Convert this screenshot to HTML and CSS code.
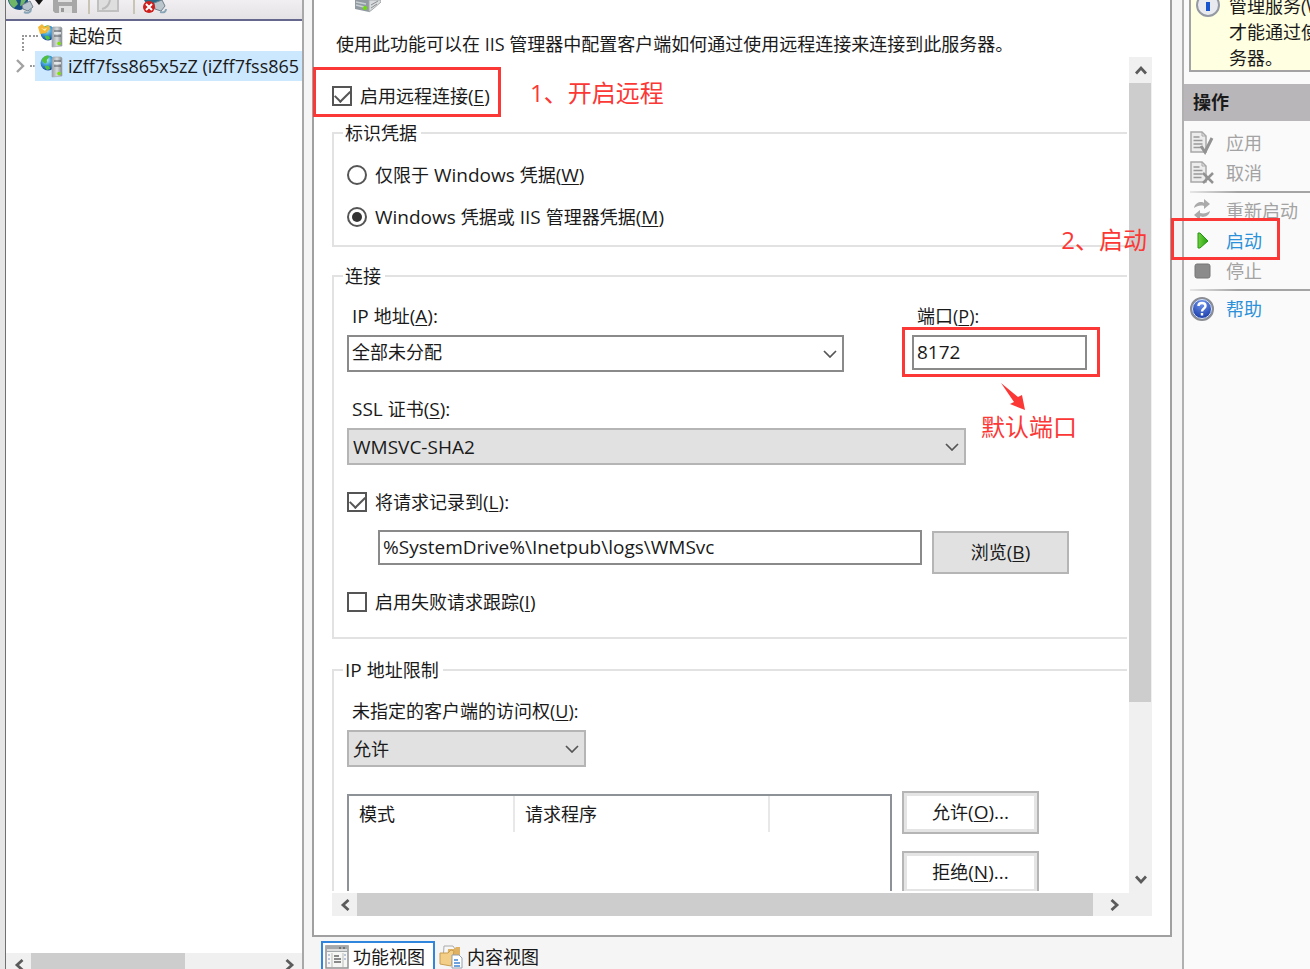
FILE: index.html
```html
<!DOCTYPE html>
<html lang="zh-CN">
<head>
<meta charset="utf-8">
<title>IIS 管理服务</title>
<link rel="stylesheet" href="styles.css">
</head>
<body>
<svg class="defs" aria-hidden="true">
  <defs>
    <radialGradient id="globe" cx="40%" cy="30%" r="75%">
      <stop offset="0" stop-color="#c9f1ff"/><stop offset=".45" stop-color="#3f9fdb"/><stop offset="1" stop-color="#123b8f"/>
    </radialGradient>
    <linearGradient id="tower" x1="0" x2="1"><stop offset="0" stop-color="#9aa1a6"/><stop offset=".5" stop-color="#d5dadd"/><stop offset="1" stop-color="#81888d"/></linearGradient>
    <linearGradient id="play" x1="0" x2="1"><stop offset="0" stop-color="#6fd23c"/><stop offset="1" stop-color="#27a012"/></linearGradient>
    <radialGradient id="help" cx="50%" cy="25%" r="80%"><stop offset="0" stop-color="#6f95ee"/><stop offset="1" stop-color="#0c2f9c"/></radialGradient>
    <symbol id="globe-server" viewBox="0 0 24 24">
      <circle cx="8" cy="9" r="7.500" fill="url(#globe)"/>
      <path d="M2 5c3-4 6-4 7-3 1 2-3 3-2 5 0 3-2 3-4 1-1-1-1-2-1-3zM5 12c3-1 5 0 5 3l-3 1c-1-1-2-2-2-4z" fill="#4fbf3c"/>
      <path d="M13 3h8l1 1v18l-10 1V5z" fill="url(#tower)" stroke="#a3aaae" stroke-width=".7"/>
      <path d="M14 7h7M14 12h7" stroke="#545b60" stroke-width="1.200"/>
      <path d="M14 9h7" stroke="#eef1f2" stroke-width="1.500"/>
      <circle cx="19" cy="19.500" r="1.800" fill="#7ce600"/>
    </symbol>
    <symbol id="left" viewBox="0 0 10 12"><path d="M8.500 1 3 6l5.500 5" fill="none" stroke="#5b5b5b" stroke-width="2.800"/></symbol>
    <symbol id="right" viewBox="0 0 10 12"><path d="M1.500 1 7 6l-5.500 5" fill="none" stroke="#5b5b5b" stroke-width="2.800"/></symbol>
    <symbol id="up" viewBox="0 0 12 10"><path d="M1 8.500 6 3l5 5.500" fill="none" stroke="#5b5b5b" stroke-width="2.800"/></symbol>
    <symbol id="down" viewBox="0 0 12 10"><path d="M1 1.500 6 7l5-5.500" fill="none" stroke="#5b5b5b" stroke-width="2.800"/></symbol>
    <symbol id="chevron" viewBox="0 0 14 8"><path d="m1 1 6 6 6-6" fill="none" stroke="#555" stroke-width="1.700"/></symbol>
    <symbol id="page" viewBox="0 0 24 24">
      <path d="M1 1h11l4 4v16H1z" fill="#ececec" stroke="#a8a8a8" stroke-width="1.500"/>
      <path d="M12 1v4h4" fill="none" stroke="#a8a8a8"/>
      <path d="M3.500 6h6M3.500 9.500h9M3.500 13h9M3.500 16.500h8" stroke="#999" stroke-width="1.500"/>
    </symbol>
  </defs>
</svg>

<div class="app">
  <aside class="tree-pane">
    <div class="toolbar">
      <button class="tool tool-connect" aria-label="连接">
        <svg width="36" height="15" viewBox="0 0 36 15"><path d="M0 0h20c0 5-3 9-8 10C6 10 1 6 0 0z" fill="#174f82"/><path d="M1 0h7l2 4-4 4C3 6 1 3 1 0zm12 0h5l-3 5-3 1z" fill="#6fb766"/><path d="m14 5 8-4 3 6-5 4-5-2z" fill="#b8c5ce" stroke="#71818d"/><path d="M16 12c4 2 7 0 7-3" fill="none" stroke="#88a5b7" stroke-width="2"/><path d="M27 0h8l-4 5z" fill="#171717"/></svg>
      </button>
      <button class="tool tool-save" aria-label="保存">
        <svg width="24" height="15" viewBox="0 0 24 15"><path d="M0 0h24v13H2l-2-2z" fill="#a7a7a7"/><path d="M5 0h14v2H5zM6 6h13v7H6z" fill="#e0e0e0"/><path d="M8 8h3v4H8z" fill="#999"/></svg>
      </button>
      <span class="tool-divider"></span>
      <button class="tool tool-up" aria-label="上移">
        <svg width="22" height="15" viewBox="0 0 22 15"><path d="M1 0v11h20V0" fill="#dedede" stroke="#c0c0c0" stroke-width="2"/><path d="M5 9c5-1 7-4 8-9" fill="none" stroke="#bbb" stroke-width="2"/></svg>
      </button>
      <span class="tool-divider"></span>
      <button class="tool tool-stop" aria-label="断开连接">
        <svg width="26" height="15" viewBox="0 0 26 15"><path d="M2 0h18l-4 8H7z" fill="#2a6c88"/><path d="M12 3l8-3 3 6-4 5-6-2z" fill="#bac5cc" stroke="#71818d"/><path d="M18 12c4 1 6 0 6-3" fill="none" stroke="#88a5b7" stroke-width="2"/><circle cx="7" cy="7" r="6" fill="#cf1f1c"/><path d="m4 4 6 6m0-6-6 6" stroke="#fff" stroke-width="2"/></svg>
      </button>
    </div>
    <ul class="tree">
      <li class="node">
        <span class="branch branch-corner"></span>
        <svg width="26" height="24" viewBox="0 0 26 24"><use href="#globe-server" width="24" height="24" x="2"/><path d="M0 3 4 0l3 3 4-2 1 4-4 4-6 1z" fill="#f4b838"/><path d="m3 4 3 1 3-1-2 3z" fill="#fff1a6"/></svg>
        <span class="node-text">起始页</span>
      </li>
      <li class="node">
        <span class="branch"><svg width="10" height="14" viewBox="0 0 10 14"><path d="m2 1 6 6-6 6" fill="none" stroke="#a2a2a2" stroke-width="2.400"/></svg><i></i></span>
        <span class="node-body selected">
          <svg width="24" height="24"><use href="#globe-server"/></svg>
          <span class="node-text">iZff7fss865x5zZ (iZff7fss865</span>
        </span>
      </li>
    </ul>
    <div class="hbar tree-bar">
      <button class="bar-btn" aria-label="向左"><svg width="10" height="12"><use href="#left"/></svg></button>
      <span class="thumb"></span>
      <button class="bar-btn bar-end" aria-label="向右"><svg width="10" height="12"><use href="#right"/></svg></button>
    </div>
  </aside>

  <main class="center">
    <section class="feature">
      <svg class="feature-icon" width="26" height="13" viewBox="0 0 26 13"><path d="M0 0h14v12L0 9z" fill="#909aa0"/><path d="M14 0h12v2l-8 7-4 3z" fill="#d9dbdc" stroke="#a5a9ab"/><path d="m1 2 10 2M1 5l8 2" stroke="#c9d0d4" stroke-width="1.500"/><path d="m16 5 7-4M16 8l6-4" stroke="#8a8f92"/><circle cx="10" cy="8" r="2" fill="#6ee000"/></svg>
      <p class="intro">使用此功能可以在 IIS 管理器中配置客户端如何通过使用远程连接来连接到此服务器。</p>
      <div class="scroller">
        <form class="viewport">
          <label class="check enable"><input type="checkbox" checked><span>启用远程连接<span class="latin">(<u>E</u>)</span></span></label>

          <fieldset class="group identity">
            <legend>标识凭据</legend>
            <label class="check"><input type="radio" name="cred"><span>仅限于<span class="latin"> Windows </span>凭据<span class="latin">(<u>W</u>)</span></span></label>
            <label class="check"><input type="radio" name="cred" checked><span><span class="latin">Windows </span>凭据或<span class="latin"> IIS </span>管理器凭据<span class="latin">(<u>M</u>)</span></span></label>
          </fieldset>

          <fieldset class="group connection">
            <legend>连接</legend>
            <div class="address-row">
              <div class="field">
                <label for="ip"><span class="latin">IP </span>地址<span class="latin">(<u>A</u>):</span></label>
                <span class="combo combo-ip"><select id="ip"><option>全部未分配</option></select><svg width="14" height="8"><use href="#chevron"/></svg></span>
              </div>
              <div class="field">
                <label for="port">端口(<u>P</u>):</label>
                <input id="port" class="text port latin" type="text" value="8172">
              </div>
            </div>
            <div class="field">
              <label for="ssl"><span class="latin">SSL </span>证书<span class="latin">(<u>S</u>):</span></label>
              <span class="combo combo-ssl"><select id="ssl" class="grey latin"><option>WMSVC-SHA2</option></select><svg width="14" height="8"><use href="#chevron"/></svg></span>
            </div>
            <label class="check"><input type="checkbox" checked><span>将请求记录到<span class="latin">(<u>L</u>):</span></span></label>
            <div class="log-row">
              <input class="text path latin" type="text" aria-label="日志目录" value="%SystemDrive%\Inetpub\logs\WMSvc">
              <button class="btn" type="button">浏览<span class="latin">(<u>B</u>)</span></button>
            </div>
            <label class="check"><input type="checkbox"><span>启用失败请求跟踪<span class="latin">(<u>I</u>)</span></span></label>
          </fieldset>

          <fieldset class="group restrict">
            <legend><span class="latin">IP </span>地址限制</legend>
            <div class="field">
              <label for="access">未指定的客户端的访问权(<u>U</u>):</label>
              <span class="combo combo-access"><select id="access" class="grey"><option>允许</option></select><svg width="14" height="8"><use href="#chevron"/></svg></span>
            </div>
            <div class="list-row">
              <div class="list">
                <table>
                  <thead><tr><th class="col-mode">模式</th><th class="col-req">请求程序</th><th></th></tr></thead>
                </table>
              </div>
              <div class="list-actions">
                <button class="btn outlined" type="button">允许<span class="latin">(<u>O</u>)...</span></button>
                <button class="btn outlined" type="button">拒绝<span class="latin">(<u>N</u>)...</span></button>
              </div>
            </div>
          </fieldset>
        </form>
        <div class="vbar">
          <button class="bar-btn" aria-label="向上"><svg width="12" height="10"><use href="#up"/></svg></button>
          <span class="thumb"></span>
          <button class="bar-btn bar-end" aria-label="向下"><svg width="12" height="10"><use href="#down"/></svg></button>
        </div>
        <div class="hbar">
          <button class="bar-btn" aria-label="向左"><svg width="10" height="12"><use href="#left"/></svg></button>
          <span class="thumb"></span>
          <button class="bar-btn bar-end" aria-label="向右"><svg width="10" height="12"><use href="#right"/></svg></button>
        </div>
        <span class="corner"></span>
      </div>
    </section>
    <nav class="tabs">
      <button class="tab active">
        <svg width="24" height="24" viewBox="0 0 24 24"><path d="M1 1h22v22H1z" fill="#f6f6f4" stroke="#929292" stroke-width="1.500"/><path d="M1 1h22v6H1z" fill="#a5a8aa"/><path d="M2 5h20" stroke="#dedede" stroke-width="2"/><path d="M14 3h2m2 0h2" stroke="#606060" stroke-width="1.500"/><path d="M7 8v14M18 8v14" stroke="#bbb"/><path d="M3 10h2m-2 4h2m-2 4h2m14-8h2m-2 4h2" stroke="#a8b6ce" stroke-width="1.500"/><path d="M9 11h5m-5 3h7m-7 3h7" stroke="#666" stroke-width="1.500"/></svg>
        功能视图
      </button>
      <button class="tab">
        <svg width="24" height="24" viewBox="0 0 24 24"><path d="M5 1h9l2 3v12H4z" fill="#f7f7f7" stroke="#aaa"/><path d="M9 4h6l2-2h4v17H8z" fill="#dfb263"/><path d="M1 8h8l3-3 3 1-3 15-11-2z" fill="#f2ce86" stroke="#c99e50"/><path d="M13 10h7l3 3v10H13z" fill="#fff" stroke="#929fae"/><path d="M15 15h4m-4 3h6m-6 3h6" stroke="#3f85d2" stroke-width="1.500"/></svg>
        内容视图
      </button>
    </nav>
  </main>

  <aside class="actions-pane">
    <div class="notice">
      <svg width="24" height="24" viewBox="0 0 24 24"><circle cx="12" cy="12" r="11" fill="#e8eaf0" stroke="#9499a4" stroke-width="2"/><path d="M12 9v9M12 5v2" stroke="#1954cf" stroke-width="4"/></svg>
      <p>管理服务(W<br>才能通过使<br>务器。</p>
    </div>
    <h2>操作</h2>
    <ul class="actions">
      <li><button disabled><svg width="24" height="24"><use href="#page"/><path d="m11 15 4 6 7-14" fill="none" stroke="#929292" stroke-width="3"/></svg>应用</button></li>
      <li><button disabled><svg width="24" height="24"><use href="#page"/><path d="m13 12 10 10m0-10-10 10" stroke="#929292" stroke-width="2.500"/></svg>取消</button></li>
      <li class="rule"></li>
      <li><button disabled><svg width="24" height="24" viewBox="0 0 24 24"><path d="M4 9c1-6 8-7 10-5V0l6 5-6 5V7c-4-1-7 0-10 2zM20 12c-1 6-8 7-10 5v4l-6-5 6-5v3c4 1 7 0 10-2z" fill="#aaa"/></svg>重新启动</button></li>
      <li><a href="#start"><svg width="24" height="24" viewBox="0 0 24 24"><path d="M8 4h2l8 8-8 7H8z" fill="url(#play)" stroke="#249512"/></svg>启动</a></li>
      <li><button disabled><svg width="24" height="24" viewBox="0 0 24 24"><rect x="5" y="5" width="15" height="14" rx="2" fill="#8b8b8b" stroke="#777"/></svg>停止</button></li>
      <li class="rule"></li>
      <li><a href="#help-page"><svg width="24" height="24" viewBox="0 0 24 24"><circle cx="12" cy="12" r="11" fill="url(#help)" stroke="#8a8d92" stroke-width="2"/><circle cx="12" cy="12" r="9.500" fill="none" stroke="#dce4f3"/><path d="M8.500 9c0-4 7-4 7 0 0 2.500-3.500 2.500-3.500 5.500M12 16v2.500" fill="none" stroke="#fff" stroke-width="2.400"/></svg>帮助</a></li>
    </ul>
  </aside>

  <span class="mark mark-enable"></span>
  <span class="note note-enable">1、开启远程</span>
  <span class="mark mark-port"></span>
  <svg class="note-arrow" width="26" height="28" viewBox="0 0 26 28"><path d="M0 0 17 14l4-2 3 15-15-6 4-2z" fill="#fb3836"/></svg>
  <span class="note note-port">默认端口</span>
  <span class="mark mark-start"></span>
  <span class="note note-start">2、启动</span>
</div>
</body>
</html>
```
FILE: styles.css
```css
* { box-sizing: border-box; }
body {
  margin: 0;
  font: 18px/24px "Open Sans", "Noto Sans CJK SC", sans-serif;
  color: #1a1a1a;
  background: #f5f5f5;
}
button, input, select { font: inherit; color: inherit; margin: 0; }
button { border: 0; background: none; padding: 0; }
ul { list-style: none; margin: 0; padding: 0; }
svg { display: block; flex: none; }
u { text-underline-offset: 2px; }
.defs { position: absolute; width: 0; height: 0; }
.latin { font-size: 19px; }
span.latin { line-height: 20px; white-space: pre; }

.app {
  position: relative;
  display: grid;
  grid-template-columns: 304px minmax(0, 1fr) 128px;
  height: 100vh;
  overflow: hidden;
}

/* Connections tree */
.tree-pane {
  display: flex;
  flex-direction: column;
  min-height: 0;
  border-left: 5px solid #e6e6e6;
  border-right: 2px solid #a8a8a8;
  background: #fff;
  box-shadow: inset 1px 0 #707070;
}
.toolbar {
  display: flex;
  align-items: flex-start;
  height: 21px;
  padding-left: 2px;
  margin-left: 1px;
  border-bottom: 2px solid #66678c;
  background: linear-gradient(#f1eff1, #e4e2e4);
}
.tool-save { margin-left: 9px; }
.tool-divider { width: 2px; height: 14px; margin: 0 7px 0 11px; background: #c8c5b5; }
.tool-up + .tool-divider { margin-left: 14px; }
.tree { flex: 1; padding: 0 0 0 1px; overflow: hidden; }
.node { display: flex; align-items: center; height: 30px; white-space: nowrap; }
.branch { flex: none; display: flex; align-items: center; justify-content: space-between; width: 29px; height: 30px; padding-left: 9px; }
.branch i { width: 5px; border-top: 2px dotted #999; }
.branch-corner { width: 16px; height: 16px; margin: 14px 0 0 16px; padding: 0; border: dotted #999; border-width: 2px 0 0 2px; }
.branch-corner + svg + .node-text { margin-left: 5px; }
.node-body { flex: 1; display: flex; align-items: center; gap: 4px; min-width: 0; height: 30px; padding-left: 5px; overflow: hidden; }
.selected { background: #cce8ff; }

/* Scroll bars */
.hbar, .vbar { display: flex; background: #f0f0f0; }
.vbar { flex-direction: column; }
.bar-btn { flex: none; display: grid; place-items: center; width: 25px; height: 23px; }
.vbar .bar-btn { width: 23px; height: 26px; }
.bar-end { margin-left: auto; }
.vbar .bar-end { margin: auto 0 0; }
.thumb { background: #cdcdcd; }
.tree-bar { flex: none; height: 16px; margin-left: 1px; overflow: hidden; }
.tree-bar .thumb { width: 52%; }

/* Feature page */
.center { display: flex; flex-direction: column; min-width: 0; min-height: 0; padding: 0 10px 0 8px; }
.feature {
  flex: 1;
  display: flex;
  flex-direction: column;
  min-height: 0;
  padding: 0 18px 19px;
  border: 2px solid #a0a0a0;
  border-top: 0;
  background: #fff;
}
.feature-icon { margin-left: 23px; }
.intro { margin: 19px 0 1px 4px; white-space: nowrap; }
.scroller {
  flex: 1;
  display: grid;
  grid-template: minmax(0, 1fr) 23px / minmax(0, 1fr) 23px;
  min-height: 0;
}
.viewport { overflow: hidden; white-space: nowrap; margin-bottom: 2px; padding: 27px 2px 0 0; }
.vbar .thumb { height: 74%; margin-right: 1px; }
.scroller .hbar .thumb { flex: 1; }
.scroller .hbar .bar-end { width: 36px; padding-left: 8px; }
.corner { background: #f0f0f0; }

.group { min-width: 0; margin: 0; padding: 0 0 0 13px; border: 2px solid #e2e2e2; border-right: 0; }
.group legend { height: 24px; margin-left: -4px; padding: 0 4px 0 2px; }
.identity { margin-top: 13px; padding-top: 18px; padding-bottom: 16px; }
.identity .check + .check { margin-top: 18px; }
.connection { margin-top: 17px; padding-top: 16px; padding-bottom: 23px; }
.restrict { margin-top: 19px; padding-top: 17px; }

.check { display: flex; align-items: center; gap: 8px; height: 24px; }
.check input {
  appearance: none;
  flex: none;
  display: grid;
  place-items: center;
  width: 20px;
  height: 20px;
  border: 2px solid #555;
  background: #fff;
}
.check input[type="radio"] { border-radius: 50%; }
.check input[type="radio"]:checked::after { content: ""; width: 10px; height: 10px; border-radius: 50%; background: #333; }
.check input[type="checkbox"]:checked::after { content: ""; width: 13px; height: 7px; margin-bottom: 4px; border: solid #555; border-width: 0 0 2px 2px; transform: rotate(-45deg); }

.field { display: flex; flex-direction: column; align-items: flex-start; gap: 7px; }
.field label { height: 24px; padding-left: 5px; }
.address-row { display: flex; gap: 68px; margin-bottom: 25px; }
.combo { position: relative; display: flex; }
.combo svg { position: absolute; right: 7px; top: 15px; pointer-events: none; }
.combo select { appearance: none; width: 100%; height: 37px; padding: 0 0 3px 3px; border: 2px solid #8a8a8a; border-radius: 0; background: #fff; }
.combo select.grey { padding: 0 0 0 4px; border-color: #b5b5b5; background: #e1e1e1; }
.combo-ip { width: 497px; }
.combo-ssl { width: 619px; margin-bottom: 25px; }
.combo-access { width: 239px; }
.text { height: 35px; padding: 0 0 1px 3px; border: 2px solid #8a8a8a; border-radius: 0; background: #fff; }
.port { width: 175px; }
.log-row { display: flex; align-items: flex-start; gap: 10px; margin: 16px 0; padding-left: 31px; }
.path { width: 544px; }
.btn { flex: none; width: 137px; height: 43px; padding-bottom: 2px; border: 2px solid #b5b5b5; background: #e1e1e1; }
.log-row .btn { margin-top: 1px; }
.outlined { background: #fff; box-shadow: inset 0 0 0 3px #e4e4e4; }

.list-row { display: flex; gap: 10px; margin-top: 24px; }
.list { width: 545px; height: 140px; margin-top: 3px; border: 2px solid #8d9198; }
.list table { width: 100%; table-layout: fixed; border-collapse: separate; border-spacing: 0; }
.list th { height: 36px; padding: 0 10px; font-weight: normal; text-align: left; border-right: 2px solid #e8e8e8; }
.list th:last-child { border: 0; }
.col-mode { width: 166px; }
.col-req { width: 255px; }
.list-actions { display: flex; flex-direction: column; gap: 17px; }

.tabs { flex: none; display: flex; height: 32px; padding: 4px 0 0 9px; overflow: hidden; }
.tab { display: flex; align-items: center; gap: 4px; height: 31px; padding: 0 8px 0 2px; border: 2px solid transparent; white-space: nowrap; }
.tab.active { border-color: #2f86dc; background: #fff; }

/* Actions */
.actions-pane { min-width: 0; border-left: 2px solid #b0b0b0; background: #fafafa; overflow: hidden; white-space: nowrap; }
.notice { display: flex; gap: 9px; height: 72px; margin-left: 5px; padding-left: 5px; border: solid #a3a3a3; border-width: 0 0 2px 2px; background: #ffffe1; overflow: hidden; }
.notice svg { margin-top: -7px; }
.notice p { margin: -7px 0 0; line-height: 26px; }
.actions-pane h2 { margin: 12px 0 7px; padding: 0 0 0 9px; font-size: 18px; line-height: 37px; background: #b9b6b9; }
.actions { padding-left: 6px; }
.actions button, .actions a { display: flex; align-items: center; gap: 12px; height: 30px; color: #a3a3a3; text-decoration: none; }
.actions a { color: #2c91d8; }
.rule { height: 2px; margin: 3px 0; background: linear-gradient(90deg, #e6e6e6, #a4a4a4 40%); }

/* Callouts laid over the window */
.mark { position: absolute; border: 3px solid #fb3836; pointer-events: none; }
.note { position: absolute; font-size: 24px; line-height: 32px; color: #fb3836; white-space: nowrap; }
.mark-enable { left: 313px; top: 67px; width: 188px; height: 50px; }
.note-enable { left: 530px; top: 77px; }
.mark-port { left: 902px; top: 327px; width: 198px; height: 50px; }
.note-arrow { position: absolute; left: 1001px; top: 383px; }
.note-port { left: 981px; top: 411px; }
.mark-start { right: 30px; top: 218px; width: 109px; height: 42px; }
.note-start { right: 163px; top: 224px; }
```
